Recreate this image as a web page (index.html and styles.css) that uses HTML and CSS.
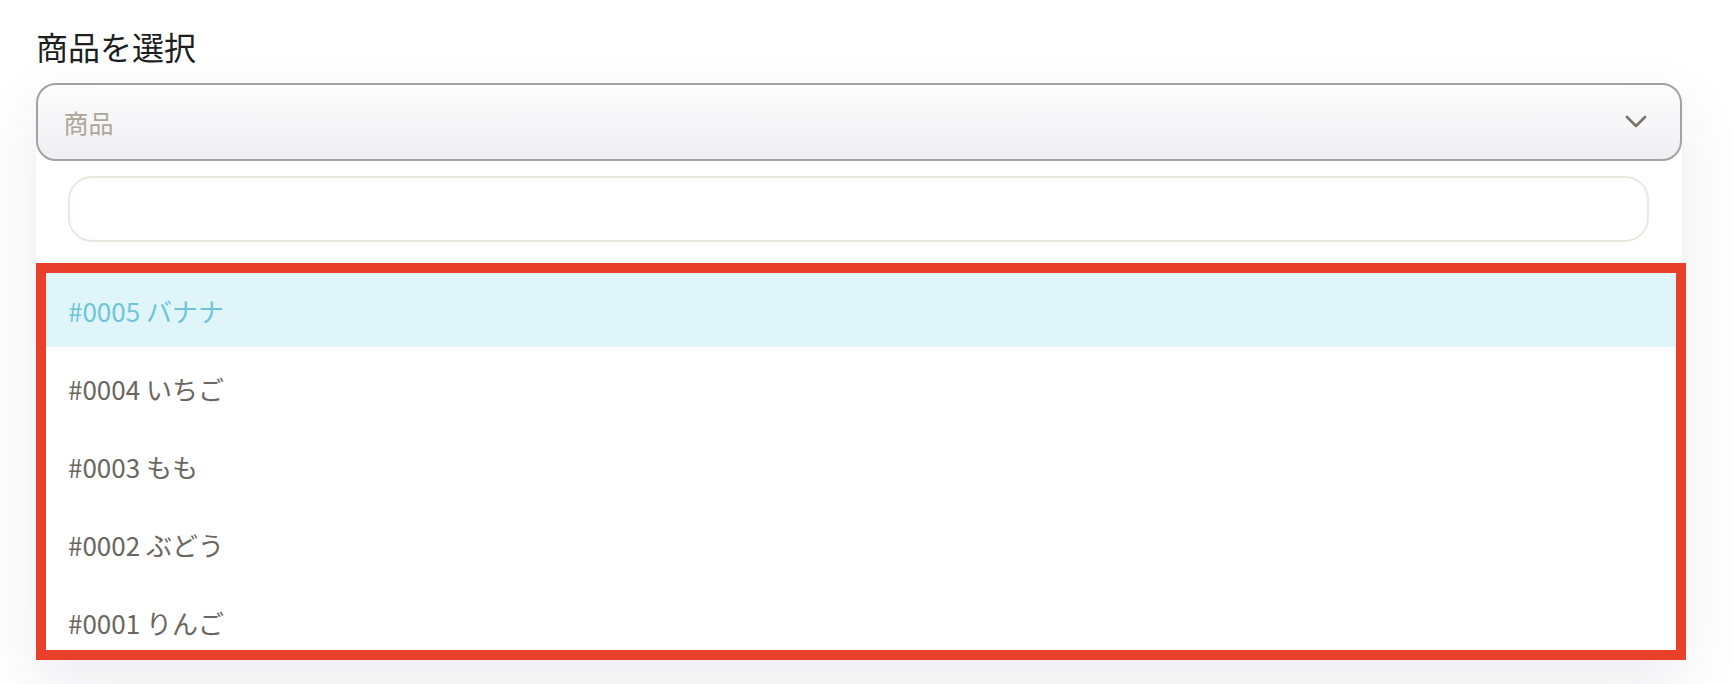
FILE: index.html
```html
<!DOCTYPE html>
<html lang="ja">
<head>
<meta charset="utf-8">
<title>商品を選択</title>
<link rel="stylesheet" href="styles.css">
</head>
<body>
<div class="page">
  <h1 class="label">商品を選択</h1>
  <div class="select-wrap">
    <div class="select">
      <span class="placeholder">商品</span>
      <svg class="chevron" width="22" height="14" viewBox="0 0 22 14"><path d="M2 2 L11 11 L20 2" fill="none" stroke="#7b7468" stroke-width="2.6" stroke-linecap="round" stroke-linejoin="round"/></svg>
    </div>
    <div class="menu">
      <div class="search-row"><div class="search"></div></div>
      <ul class="options">
        <li class="option active">#0005 バナナ</li>
        <li class="option">#0004 いちご</li>
        <li class="option">#0003 もも</li>
        <li class="option">#0002 ぶどう</li>
        <li class="option">#0001 りんご</li>
      </ul>
    </div>
    <div class="frame"></div>
  </div>
</div>
</body>
</html>
```

FILE: styles.css
```css
html, body {
  margin: 0;
  padding: 0;
  background: #ffffff;
  height: 684px;
  overflow: hidden;
}
body {
  font-family: "Noto Sans CJK JP", "Noto Sans", sans-serif;
}
.page {
  padding: 22px 52px 0 36px;
}
.label {
  margin: 0 0 13px 0;
  font-size: 32px;
  line-height: 48px;
  font-weight: 400;
  color: #1e1e1e;
}
.select-wrap {
  position: relative;
  box-shadow: 0 24px 60px rgba(40, 40, 80, 0.09);
}
.select {
  box-sizing: border-box;
  height: 78px;
  border: 2px solid #a2a2a2;
  border-radius: 20px;
  background: linear-gradient(#fdfdfd, #efeef1);
  display: flex;
  align-items: center;
  justify-content: space-between;
  padding: 0 33px 0 25.5px;
}
.placeholder {
  font-size: 25px;
  color: #aca699;
}
.chevron {
  display: block;
}
.menu {
  background: #ffffff;
  padding-top: 15px;
}
.search-row {
  padding: 0 33px 0 31.5px;
}
.search {
  box-sizing: border-box;
  height: 66px;
  border: 2px solid #ece7df;
  border-radius: 24px;
  background: #ffffff;
}
.options {
  list-style: none;
  margin: 27px 0 0 0;
  padding: 0;
  height: 390px;
  overflow: hidden;
}
.option {
  box-sizing: border-box;
  height: 78px;
  display: flex;
  align-items: center;
  padding: 4px 0 0 32px;
  font-size: 26px;
  color: #6b665f;
}
.option.active {
  background: #e0f5fa;
  color: #6ec5d8;
}
.frame {
  position: absolute;
  top: 180px;
  left: 0;
  right: -4px;
  height: 397px;
  box-sizing: border-box;
  border: 10px solid #e8402a;
  pointer-events: none;
}
```
